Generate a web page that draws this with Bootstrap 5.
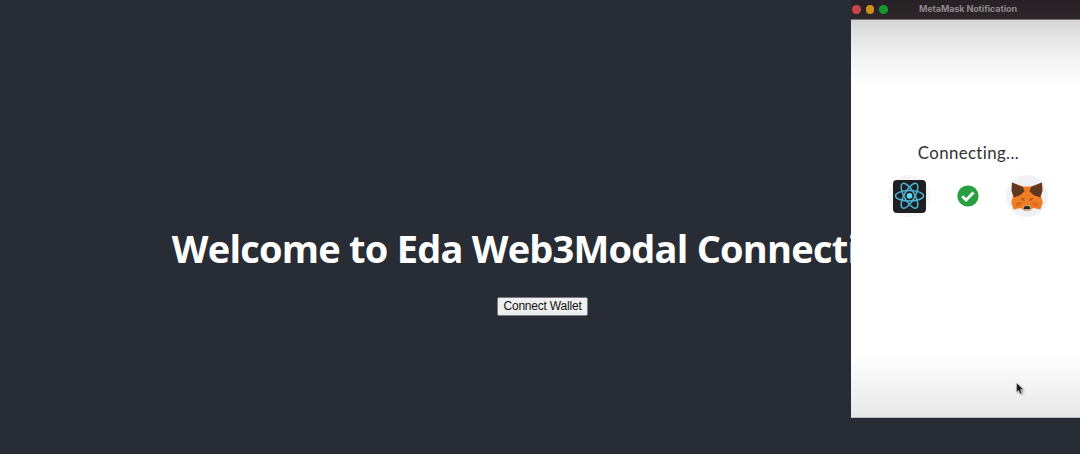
<!DOCTYPE html>
<html lang="en">
<head>
<meta charset="utf-8">
<meta name="viewport" content="width=device-width, initial-scale=1">
<title>Eda Web3Modal</title>
<link href="https://cdn.jsdelivr.net/npm/bootstrap@5.3.0/dist/css/bootstrap.min.css" rel="stylesheet">
<style>
body { height: 454px; background: #282c34; }
.app-header { height: 454px; padding: 221px 0 0 4px; }
.app-title { font: 700 38px/54px "Open Sans", "Noto Sans", sans-serif; letter-spacing: -.78px; margin: 0 7px 22px 0; color: #fff; }
.wallet-btn { width: 91px; height: 19px; padding: 0 0 0 1px; border: 1px solid #777a80; border-radius: 2px; background: #efefef; color: #111; font: 12px/17px "Liberation Sans", Arial, sans-serif; letter-spacing: -.2px; }
.notice { width: 229px; height: 418px; border-bottom: 1px solid #b9babb; background: #fff; }
.title-bar { height: 20px; padding-left: 1px; gap: 5px; background: linear-gradient(#262126, #2e2629); border-bottom: 1px solid #777475; }
.title-bar .dot { width: 8.5px; height: 8.5px; }
.dot-close { background: #c94547; }
.dot-min { background: #c8901e; }
.dot-max { background: #16962c; }
.bar-text { left: 68px; top: 2px; font: 700 9px/14px Inter, sans-serif; letter-spacing: -.1px; color: #8d888a; }
.notice-body { height: 397px; padding-top: 120px; background: linear-gradient(#d4d4d4 0, #e5e5e5 17px, #f5f5f5 42px, #fff 67px, #fff 335px, #f5f5f5 362px, #e7e7e7 397px); }
.status { width: 235px; font: 400 16.8px/26px Lato, sans-serif; letter-spacing: .4px; font-variant-ligatures: none; color: #303236; }
.pair { width: 160px; margin: 9px 0 0 37px; }
.halo { width: 42px; height: 42px; background: #f5f5f5; }
.halo.fox { background: #f0f2f5; }
.pointer { left: 165px; top: 382px; filter: drop-shadow(1px 1px 1px rgba(0,0,0,.4)); }
</style>
</head>
<body class="overflow-hidden position-relative">
<main class="app-header d-flex flex-column align-items-center">
  <h1 class="app-title text-nowrap">Welcome to Eda Web3Modal Connection</h1>
  <button class="wallet-btn" type="button">Connect Wallet</button>
</main>
<section class="notice position-absolute top-0 end-0 overflow-hidden">
  <div class="title-bar d-flex align-items-center position-relative">
    <span class="dot dot-close rounded-circle"></span>
    <span class="dot dot-min rounded-circle"></span>
    <span class="dot dot-max rounded-circle"></span>
    <span class="bar-text position-absolute text-nowrap">MetaMask Notification</span>
  </div>
  <div class="notice-body">
    <div class="status text-center">Connecting...</div>
    <div class="pair d-flex align-items-center justify-content-between">
      <div class="halo rounded-circle d-flex align-items-center justify-content-center">
        <svg width="33" height="33" viewBox="0 0 33 33" fill="none">
          <rect width="33" height="33" rx="4" fill="#1d1f22"/>
          <g stroke="#4fb5d3" stroke-width="1.5">
            <ellipse cx="16.5" cy="15.8" rx="14" ry="5.2"/>
            <ellipse cx="16.5" cy="15.8" rx="14" ry="5.2" transform="rotate(60 16.5 15.8)"/>
            <ellipse cx="16.5" cy="15.8" rx="14" ry="5.2" transform="rotate(120 16.5 15.8)"/>
          </g>
          <circle cx="16.5" cy="15.8" r="2.9" fill="#62d4f6"/>
        </svg>
      </div>
      <svg width="22" height="22" viewBox="0 0 22 22">
        <circle cx="11" cy="11" r="10.6" fill="#28a041"/>
        <path d="M5.2 11.3l3.9 3.7 7.4-7.4" fill="none" stroke="#fff" stroke-width="2.8"/>
      </svg>
      <div class="halo fox rounded-circle d-flex align-items-center justify-content-center">
        <svg width="32" height="29" viewBox="0 0 32 29">
          <path d="M1 .5L12 4.500h8L31 .5l.4 8-1.400 6 1.800 6-2.500 7-6.800-1.600-4 2.800h-5L9.500 25.900 2.700 27.500.200 20.500l1.800-6L.6 8.500z" fill="#ef7b22"/>
          <path d="M1 .5L12 5l1.600 4.500L9 13.500l-6 2L.6 9zM31 .5L20 5l-1.600 4.500L23 13.500l6 2L31.400 9z" fill="#5f3822"/>
          <path d="M3 15.500l6-2 4.600-4h4.800l4.600 4 6 2-2 4.500-11 3-11-3z" fill="#f07e25"/>
          <path d="M9.500 15.500l4 1.200.2 2.200-2.700-.6zM22.500 15.500l-4 1.200-.2 2.200 2.700-.6z" fill="#b8581d"/>
          <path d="M5 20.500l6-.8-1 4-5 1zM27 20.500l-6-.8 1 4 5 1z" fill="#dc6b1e"/>
          <path d="M12.500 23.500h7l1 3-2.500 2.200h-4l-2.500-2.200z" fill="#c9ad91"/>
          <path d="M13.500 24.200h5l.8 2.800h-6.600z" fill="#252426"/>
        </svg>
      </div>
    </div>
  </div>
  <svg class="pointer position-absolute" width="8" height="13" viewBox="0 0 8 13">
    <path d="M.6 1v9l2-1.800 1.500 3.600 1.700-.8-1.500-3.400h2.900z" fill="#111" stroke="#ddd" stroke-width=".5"/>
  </svg>
</section>
<script src="https://cdn.jsdelivr.net/npm/bootstrap@5.3.0/dist/js/bootstrap.bundle.min.js"></script>
</body>
</html>
